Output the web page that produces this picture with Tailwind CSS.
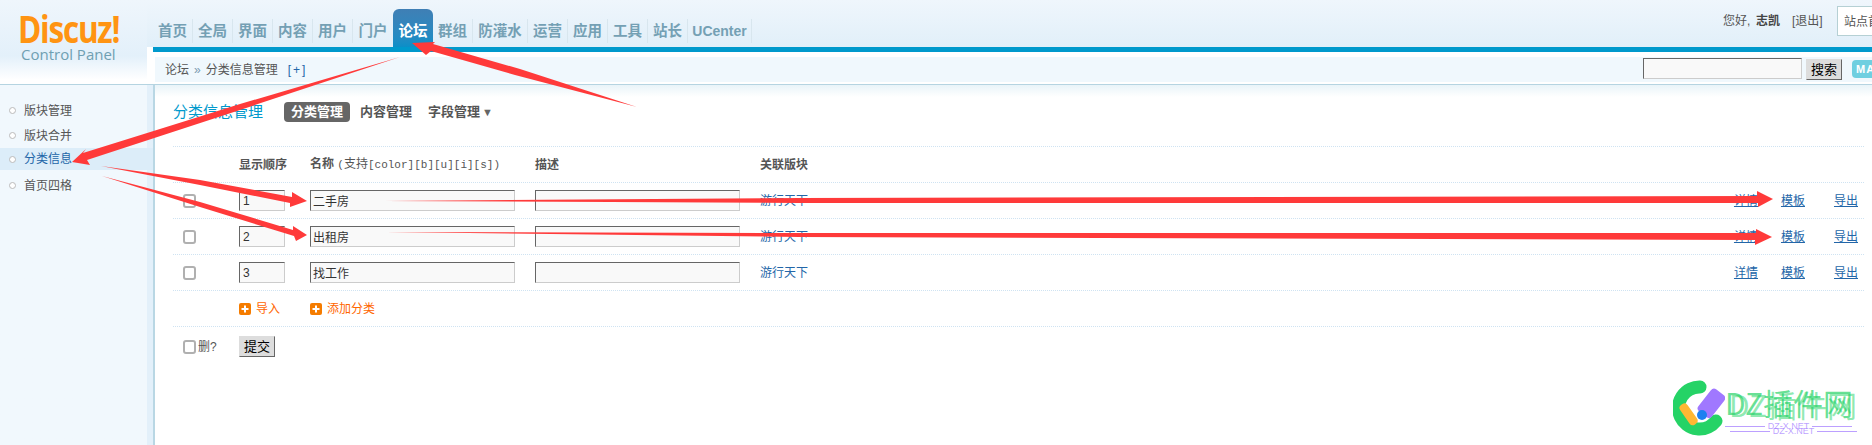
<!DOCTYPE html>
<html lang="zh-CN">
<head>
<meta charset="UTF-8" />
<title>分类信息管理</title>
<script src="https://cdn.jsdelivr.net/npm/@tailwindcss/browser@4"></script>
</head>
<body class="relative w-[1872px] h-[445px] overflow-hidden bg-white text-[12px] text-[#555] font-['Liberation_Sans','Noto_Sans_CJK_SC',sans-serif]">

<!-- top -->
<div class="flex h-[85px] border-b border-[#b5d4e1]">
    <div class="w-[147px] h-[80px] pl-[18px] pt-[9px] bg-linear-to-b from-[#eff6fc] via-[#e3f0fa] via-70% to-white">
        <div class="origin-left scale-x-[0.83] whitespace-nowrap text-[38px] leading-[38px] font-bold tracking-[-1.5px] text-[#ff9412] font-['Open_Sans',sans-serif]">Discuz!</div>
        <div class="mt-[-1px] ml-[3px] text-[15px] leading-[17px] text-[#6f9fb2] font-['Open_Sans',sans-serif]">Control Panel</div>
    </div>
    <div class="flex-1 flex flex-col">
        <div class="relative flex h-[47px] pl-[6px] pt-[19px] bg-linear-to-b from-[#eff6fc] to-[#e1eff9] text-[14.5px] leading-[24px] font-bold text-[#74a0b4]">
            <a class="w-[40px] h-[24px] text-center border-r border-[#d8e6ee]">首页</a>
            <a class="w-[40px] h-[24px] text-center border-r border-[#d8e6ee]">全局</a>
            <a class="w-[40px] h-[24px] text-center border-r border-[#d8e6ee]">界面</a>
            <a class="w-[40px] h-[24px] text-center border-r border-[#d8e6ee]">内容</a>
            <a class="w-[40px] h-[24px] text-center border-r border-[#d8e6ee]">用户</a>
            <a class="w-[40px] h-[24px] text-center">门户</a>
            <a class="w-[40px] h-[38px] mt-[-10px] pt-[10px] text-center text-white rounded-t-[6px] bg-linear-to-b from-[#3f7fb5] to-[#0a8fc8]">论坛</a>
            <a class="w-[40px] h-[24px] text-center border-r border-[#d8e6ee]">群组</a>
            <a class="w-[55px] h-[24px] text-center border-r border-[#d8e6ee]">防灌水</a>
            <a class="w-[40px] h-[24px] text-center border-r border-[#d8e6ee]">运营</a>
            <a class="w-[40px] h-[24px] text-center border-r border-[#d8e6ee]">应用</a>
            <a class="w-[40px] h-[24px] text-center border-r border-[#d8e6ee]">工具</a>
            <a class="w-[40px] h-[24px] text-center border-r border-[#d8e6ee]">站长</a>
            <a class="w-[64px] h-[24px] text-center border-r border-[#d8e6ee] text-[14px]">UCenter</a>
            <div class="ml-auto mt-[-13px] flex items-start font-normal text-[12px] text-[#555] leading-[30px]">
                <span class="w-[33px]">您好,</span>
                <b class="w-[36px] text-[#444]">志凯</b>
                <span class="w-[45px]">[退出]</span>
                <div class="w-[35px] h-[30px] pl-[6px] bg-white border border-r-0 border-[#b5d0d4] whitespace-nowrap overflow-hidden">站点首页</div>
            </div>
        </div>
        <div class="ml-[6px] h-[5px] bg-[#0099cc]"></div>
        <div class="ml-[8px] mt-[5px] h-[25px] flex items-center pl-[10px] bg-[#f0f8fd] text-[#555]">
            <span>论坛</span>
            <span class="mx-[5px] text-[#7a9ab0]">»</span>
            <span>分类信息管理</span>
            <span class="ml-[10px] text-[#2366a8] tracking-[2px]">[+]</span>
            <input type="text" class="ml-auto w-[159px] h-[21px] mt-[-3px] bg-[#f9f9f9] border border-t-[#666] border-l-[#666] border-r-[#ccc] border-b-[#ccc]" />
            <button class="ml-[4px] w-[36px] h-[21px] mt-[-1px] bg-[#ddd] border border-t-[#ddd] border-l-[#ddd] border-r-[#666] border-b-[#666] text-[13px] leading-[19px] text-black">搜索</button>
            <div class="ml-[10px] w-[20px] h-[18px] mt-[-1px] pl-[4px] overflow-hidden rounded-l-[4px] bg-[#6fcfe0] text-[11px] leading-[18px] font-bold tracking-[1px] text-white">MA</div>
        </div>
    </div>
</div>

<div class="flex h-[360px]">
    <!-- sidebar -->
    <div class="w-[155px] pt-[13px] bg-linear-to-r from-[#f1f8fd] from-[147px] to-[#e3f0fa] to-[147px] border-r-2 border-[#b9d7e4]">
        <div class="flex items-center h-[25px] pl-[9px]"><i class="w-[7px] h-[7px] rounded-full border border-[#bbb] bg-white"></i><span class="ml-[8px]">版块管理</span></div>
        <div class="flex items-center h-[25px] pl-[9px]"><i class="w-[7px] h-[7px] rounded-full border border-[#bbb] bg-white"></i><span class="ml-[8px]">版块合并</span></div>
        <div class="flex items-center h-[22px] mb-[3px] pl-[9px] bg-[#dcedf9] text-[#2366a8]"><i class="w-[7px] h-[7px] rounded-full border border-[#bbb] bg-white"></i><span class="ml-[8px]">分类信息</span></div>
        <div class="flex items-center h-[25px] pl-[9px]"><i class="w-[7px] h-[7px] rounded-full border border-[#bbb] bg-white"></i><span class="ml-[8px]">首页四格</span></div>
    </div>

    <!-- content -->
    <div class="flex-1 pl-[18px] pr-[8px] bg-linear-to-b from-[#e9f4f9] to-white to-[12px] bg-no-repeat">
        <div class="flex items-center h-[61px] pb-[7px]">
            <h3 class="w-[111px] text-[15px] text-[#0099cc]">分类信息管理</h3>
            <span class="w-[66px] h-[20px] text-center leading-[20px] rounded-[4px] bg-[#666] text-[13px] font-bold text-white">分类管理</span>
            <span class="ml-[10px] text-[13px] font-bold">内容管理</span>
            <span class="ml-[16px] text-[13px] font-bold">字段管理</span>
            <span class="ml-[2px] text-[11px] text-[#666]">▼</span>
        </div>

        <div class="flex items-center h-[36px] border-t border-dotted border-[#cfe3f2] font-bold">
            <div class="w-[66px]"></div>
            <div class="w-[71px]">显示顺序</div>
            <div class="w-[225px] whitespace-nowrap">名称 <span class="font-normal font-['Liberation_Mono','Noto_Sans_CJK_SC',monospace] text-[11px]">(<span class="text-[12px]">支持</span>[color][b][u][i][s])</span></div>
            <div class="w-[225px]">描述</div>
            <div>关联版块</div>
        </div>

        <div class="flex items-center h-[36px] border-t border-dotted border-[#cfe3f2]">
            <div class="w-[66px] pl-[10px]"><input type="checkbox" class="block appearance-none w-[13px] h-[14px] rounded-[3px] border-2 border-[#b0b0b0]" /></div>
            <div class="w-[71px]"><input value="1" class="block w-[46px] h-[21px] px-[3px] bg-[#f9f9f9] border border-t-[#666] border-l-[#666] border-r-[#ccc] border-b-[#ccc] text-[#333]" /></div>
            <div class="w-[225px]"><input value="二手房" class="block w-[205px] h-[21px] px-[2px] bg-[#f9f9f9] border border-t-[#666] border-l-[#666] border-r-[#ccc] border-b-[#ccc] text-[#333]" /></div>
            <div class="w-[225px]"><input class="block w-[205px] h-[21px] bg-[#f9f9f9] border border-t-[#666] border-l-[#666] border-r-[#ccc] border-b-[#ccc]" /></div>
            <a class="text-[#2366a8]">游行天下</a>
            <a class="ml-auto text-[#2366a8] underline">详情</a>
            <a class="ml-[23px] text-[#2366a8] underline">模板</a>
            <a class="ml-[29px] mr-[6px] text-[#2366a8] underline">导出</a>
        </div>

        <div class="flex items-center h-[36px] border-t border-dotted border-[#cfe3f2]">
            <div class="w-[66px] pl-[10px]"><input type="checkbox" class="block appearance-none w-[13px] h-[14px] rounded-[3px] border-2 border-[#b0b0b0]" /></div>
            <div class="w-[71px]"><input value="2" class="block w-[46px] h-[21px] px-[3px] bg-[#f9f9f9] border border-t-[#666] border-l-[#666] border-r-[#ccc] border-b-[#ccc] text-[#333]" /></div>
            <div class="w-[225px]"><input value="出租房" class="block w-[205px] h-[21px] px-[2px] bg-[#f9f9f9] border border-t-[#666] border-l-[#666] border-r-[#ccc] border-b-[#ccc] text-[#333]" /></div>
            <div class="w-[225px]"><input class="block w-[205px] h-[21px] bg-[#f9f9f9] border border-t-[#666] border-l-[#666] border-r-[#ccc] border-b-[#ccc]" /></div>
            <a class="text-[#2366a8]">游行天下</a>
            <a class="ml-auto text-[#2366a8] underline">详情</a>
            <a class="ml-[23px] text-[#2366a8] underline">模板</a>
            <a class="ml-[29px] mr-[6px] text-[#2366a8] underline">导出</a>
        </div>

        <div class="flex items-center h-[36px] border-t border-dotted border-[#cfe3f2]">
            <div class="w-[66px] pl-[10px]"><input type="checkbox" class="block appearance-none w-[13px] h-[14px] rounded-[3px] border-2 border-[#b0b0b0]" /></div>
            <div class="w-[71px]"><input value="3" class="block w-[46px] h-[21px] px-[3px] bg-[#f9f9f9] border border-t-[#666] border-l-[#666] border-r-[#ccc] border-b-[#ccc] text-[#333]" /></div>
            <div class="w-[225px]"><input value="找工作" class="block w-[205px] h-[21px] px-[2px] bg-[#f9f9f9] border border-t-[#666] border-l-[#666] border-r-[#ccc] border-b-[#ccc] text-[#333]" /></div>
            <div class="w-[225px]"><input class="block w-[205px] h-[21px] bg-[#f9f9f9] border border-t-[#666] border-l-[#666] border-r-[#ccc] border-b-[#ccc]" /></div>
            <a class="text-[#2366a8]">游行天下</a>
            <a class="ml-auto text-[#2366a8] underline">详情</a>
            <a class="ml-[23px] text-[#2366a8] underline">模板</a>
            <a class="ml-[29px] mr-[6px] text-[#2366a8] underline">导出</a>
        </div>

        <div class="flex items-center h-[36px] pt-[1px] border-t border-dotted border-[#cfe3f2] text-[#f60]">
            <div class="w-[66px]"></div>
            <div class="w-[71px] flex items-center gap-[5px]">
                <svg width="12" height="12" viewBox="0 0 12 12"><rect width="12" height="12" rx="2" fill="#f57c00"/><path d="M6 2.5v7M2.5 6h7" stroke="#fff" stroke-width="2"/></svg>
                <span>导入</span>
            </div>
            <div class="flex items-center gap-[5px]">
                <svg width="12" height="12" viewBox="0 0 12 12"><rect width="12" height="12" rx="2" fill="#f57c00"/><path d="M6 2.5v7M2.5 6h7" stroke="#fff" stroke-width="2"/></svg>
                <span>添加分类</span>
            </div>
        </div>

        <div class="flex items-center h-[39px] pt-[1px] border-t border-dotted border-[#cfe3f2]">
            <div class="w-[66px] pl-[10px] flex items-center gap-[2px]">
                <input type="checkbox" class="block appearance-none w-[13px] h-[14px] rounded-[3px] border-2 border-[#b0b0b0]" />
                <span>删?</span>
            </div>
            <button class="w-[36px] h-[21px] bg-[#ddd] border border-t-[#ddd] border-l-[#ddd] border-r-[#666] border-b-[#666] text-[13px] leading-[19px] text-black">提交</button>
        </div>
    </div>
</div>

<!-- red annotation arrows drawn over the page -->
<svg class="absolute left-0 top-0 pointer-events-none" width="1872" height="445" viewBox="0 0 1872 445">
    <g fill="#ff3a3a">
        <polygon points="412,43 435,42 433,44 520,69 637,107 515,75 431,51 426,55" />
        <polygon points="400,57 240,104 83,153 86,149 72,162 90,165 87,160 240,110" />
        <polygon points="101,166 200,180 292,197 292,192 307,201 290,207 290,203 200,185" />
        <polygon points="102,176 200,202 293,230 293,226 307,235 296,241 294,236 200,207" />
        <polygon points="385,201 800,198 1757,196 1757,191 1773,199 1758,207 1758,203 800,203" />
        <polygon points="386,232 800,233 1756,233 1756,229 1772,237 1755,245 1755,240 800,237" />
    </g>
</svg>

<!-- watermark -->
<div class="absolute left-[1673px] top-[380px] w-[190px] h-[56px] pointer-events-none">
    <svg class="absolute left-0 top-0" width="52" height="56" viewBox="0 0 52 56">
        <path d="M27 7 A21 21 0 1 0 43 41" fill="none" stroke="#25d366" stroke-width="13" stroke-linecap="round" />
        <rect x="11" y="22" width="9" height="24" rx="4" fill="#ffb733" transform="rotate(-35 16 34)" />
        <rect x="30" y="9" width="17" height="28" rx="4" fill="#a078ff" transform="rotate(38 38 23)" />
        <circle cx="29" cy="35" r="5" fill="#1e80f0" />
    </svg>
    <div class="absolute left-[52px] top-[6px] whitespace-nowrap text-[30px] leading-[32px] text-[#25d366]/70 font-['Noto_Sans_CJK_SC',sans-serif]">DZ插件网</div>
    <div class="absolute left-[56px] top-[8px] whitespace-nowrap text-[30px] leading-[32px] text-[#25d366]/50 font-['Noto_Sans_CJK_SC',sans-serif]">DZ插件网</div>
    <div class="absolute left-[52px] top-[41px] flex items-center w-[127px] gap-[3px] text-[9px] leading-[10px] text-[#a078ff]/70"><i class="flex-1 h-px bg-[#a078ff]/70"></i><span>DZ-X.NET</span><i class="flex-1 h-px bg-[#a078ff]/70"></i></div>
    <div class="absolute left-[57px] top-[46px] flex items-center w-[127px] gap-[3px] text-[9px] leading-[10px] text-[#a078ff]/70"><i class="flex-1 h-px bg-[#a078ff]/70"></i><span>DZ-X.NET</span><i class="flex-1 h-px bg-[#a078ff]/70"></i></div>
</div>

</body>
</html>
